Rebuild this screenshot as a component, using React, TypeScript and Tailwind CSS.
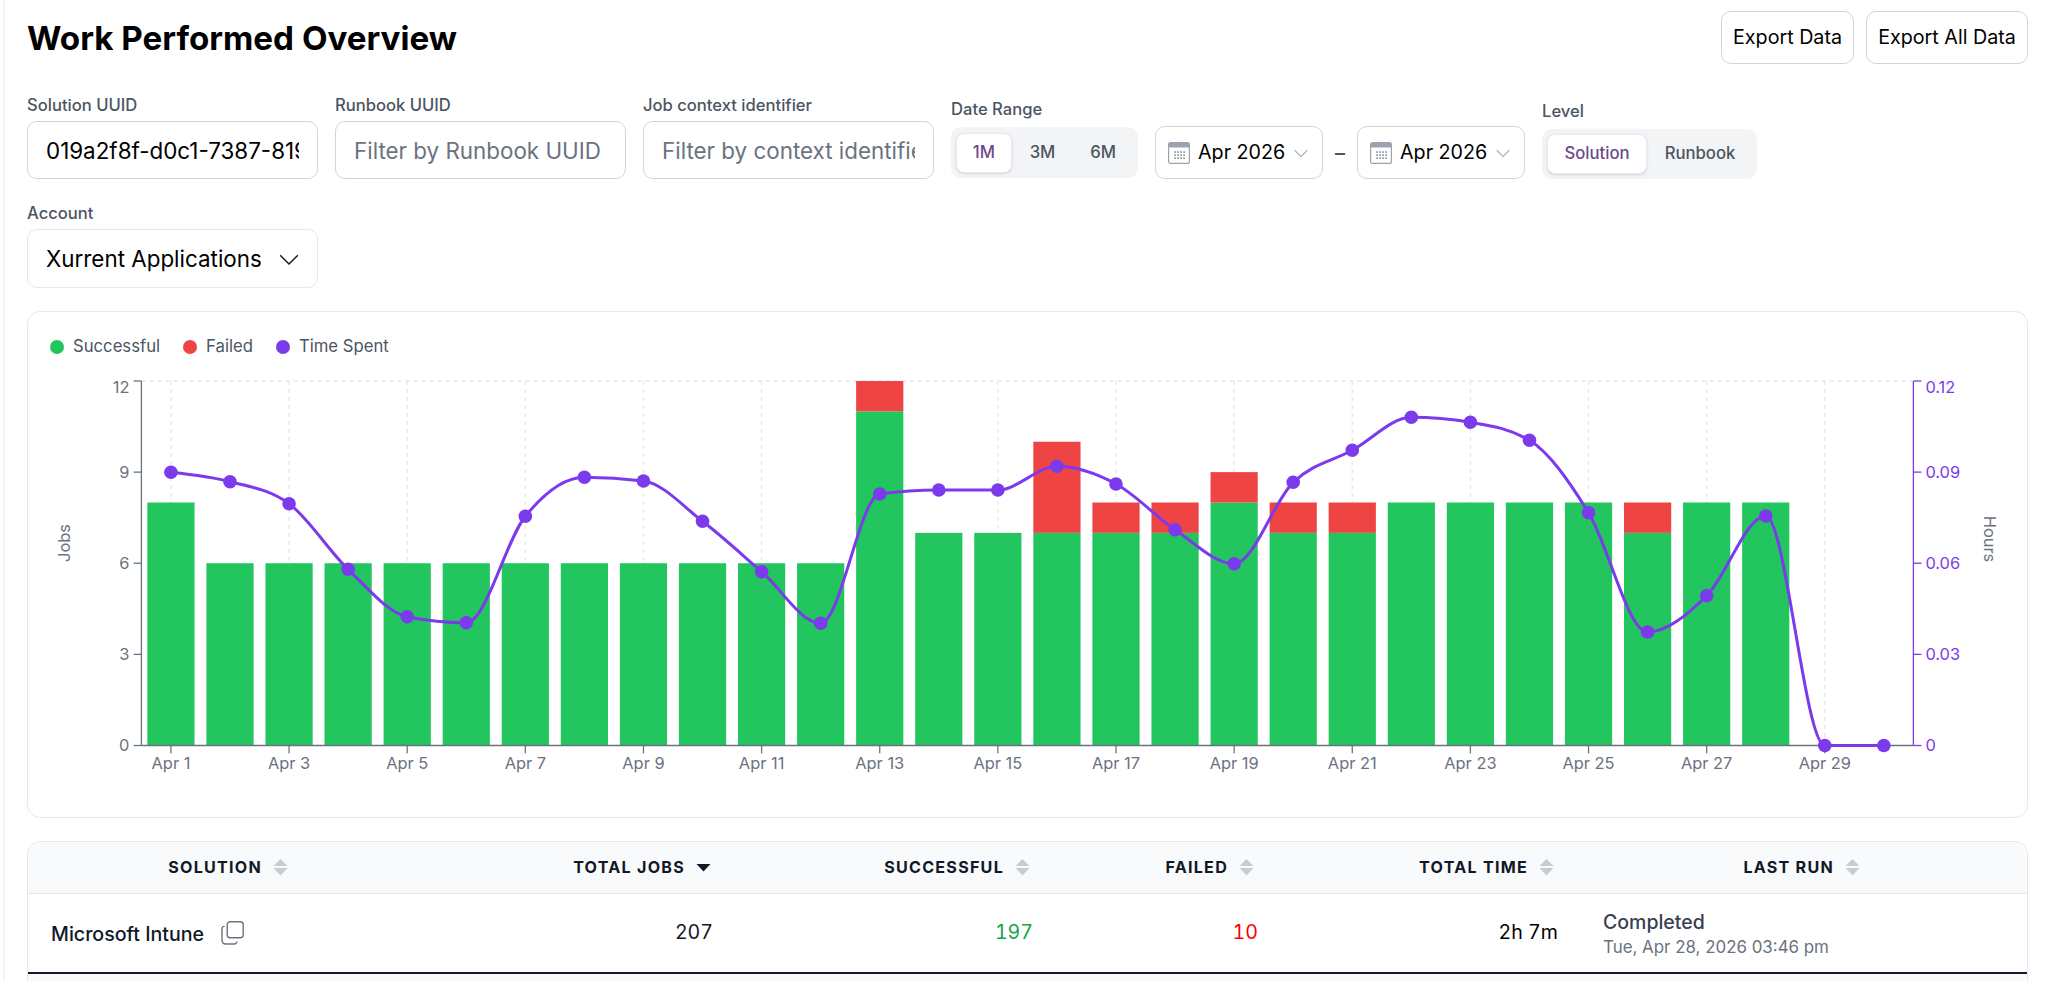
import React from "react";

const FONT = "font-['Inter',sans-serif]";

const jobs: [number, number][] = [
  [8, 0], [6, 0], [6, 0], [6, 0], [6, 0], [6, 0], [6, 0], [6, 0], [6, 0], [6, 0],
  [6, 0], [6, 0], [11, 1], [7, 0], [7, 0], [7, 3], [7, 1], [7, 1], [8, 1], [7, 1],
  [7, 1], [8, 0], [8, 0], [8, 0], [8, 0], [7, 1], [8, 0], [8, 0], [0, 0], [0, 0],
];
const lineY = [
  472.3, 481.7, 503.7, 569.3, 616.7, 622.7, 516.3, 477.3, 481, 521.3, 571.7, 623.3, 494, 490, 490,
  466.3, 484, 529.7, 563.7, 482.3, 450.3, 417.3, 422.3, 440.3, 512.7, 632, 595.7, 516, 745.5, 745.5,
];

const LEFT = 141.4;
const RIGHT = 1913.4;
const TOP = 381;
const BOTTOM = 745.5;
const STEP = (RIGHT - LEFT) / 30;
const UNIT = (BOTTOM - TOP) / 12;
const cx = (i: number) => LEFT + STEP * (i + 0.5);

function monotonePath(xs: number[], ys: number[]) {
  const n = xs.length;
  const t: number[] = new Array(n).fill(0);
  const sign = (v: number) => (v < 0 ? -1 : 1);
  for (let i = 1; i < n - 1; i++) {
    const h0 = xs[i] - xs[i - 1];
    const h1 = xs[i + 1] - xs[i];
    const s0 = (ys[i] - ys[i - 1]) / h0;
    const s1 = (ys[i + 1] - ys[i]) / h1;
    const p = (s0 * h1 + s1 * h0) / (h0 + h1);
    t[i] = (sign(s0) + sign(s1)) * Math.min(Math.abs(s0), Math.abs(s1), 0.5 * Math.abs(p)) || 0;
  }
  const edge = (i: number, j: number, tj: number) => {
    const h = xs[j] - xs[i];
    const s = (ys[j] - ys[i]) / h;
    return (3 * s - tj) / 2;
  };
  t[0] = edge(0, 1, t[1]);
  t[n - 1] = edge(n - 2, n - 1, t[n - 2]);
  let d = `M${xs[0]},${ys[0]}`;
  for (let i = 0; i < n - 1; i++) {
    const dx = (xs[i + 1] - xs[i]) / 3;
    d += `C${xs[i] + dx},${ys[i] + dx * t[i]} ${xs[i + 1] - dx},${ys[i + 1] - dx * t[i + 1]} ${xs[i + 1]},${ys[i + 1]}`;
  }
  return d;
}

function Chart() {
  const xs = jobs.map((_, i) => cx(i));
  const tickFont = { fontFamily: "Inter, sans-serif", fontSize: 16.4 };
  return (
    <svg viewBox="28 360 1999 457" className="block w-full h-[457px]">
      <line x1={LEFT} x2={RIGHT} y1={TOP} y2={TOP} stroke="#e5e7eb" strokeWidth={1.3} strokeDasharray="4 4" />
      {jobs.map((_, i) =>
        i % 2 === 0 ? (
          <line key={i} x1={cx(i)} x2={cx(i)} y1={TOP} y2={BOTTOM} stroke="#e5e7eb" strokeWidth={1.3} strokeDasharray="4 4" />
        ) : null
      )}
      {jobs.map(([s, f], i) => {
        const bw = 47.2;
        const x = cx(i) - bw / 2;
        return (
          <g key={i}>
            {s > 0 && <rect x={x} y={BOTTOM - s * UNIT} width={bw} height={s * UNIT} fill="#22c55e" />}
            {f > 0 && <rect x={x} y={BOTTOM - (s + f) * UNIT} width={bw} height={f * UNIT} fill="#ef4444" />}
          </g>
        );
      })}
      <line x1={LEFT} x2={LEFT} y1={TOP} y2={BOTTOM} stroke="#6b7280" strokeWidth={1.3} />
      <line x1={LEFT} x2={RIGHT} y1={BOTTOM} y2={BOTTOM} stroke="#6b7280" strokeWidth={1.3} />
      <line x1={RIGHT} x2={RIGHT} y1={TOP} y2={BOTTOM} stroke="#7c3aed" strokeWidth={1.3} />
      {[12, 9, 6, 3, 0].map((v) => {
        const y = BOTTOM - v * UNIT;
        return (
          <g key={v}>
            <line x1={LEFT - 7.8} x2={LEFT} y1={y} y2={y} stroke="#6b7280" strokeWidth={1.3} />
            <text x={LEFT - 12} y={v === 12 ? y + 11.5 : y + 5.8} textAnchor="end" fill="#6b7280" style={tickFont}>
              {v}
            </text>
          </g>
        );
      })}
      {["0.12", "0.09", "0.06", "0.03", "0"].map((v, i) => {
        const y = TOP + i * 3 * UNIT;
        return (
          <g key={v}>
            <line x1={RIGHT} x2={RIGHT + 8} y1={y} y2={y} stroke="#7c3aed" strokeWidth={1.3} />
            <text x={RIGHT + 12} y={i === 0 ? y + 11.5 : y + 5.8} fill="#7c3aed" style={tickFont}>
              {v}
            </text>
          </g>
        );
      })}
      {jobs.map((_, i) =>
        i % 2 === 0 ? (
          <g key={i}>
            <line x1={cx(i)} x2={cx(i)} y1={BOTTOM} y2={BOTTOM + 7.8} stroke="#6b7280" strokeWidth={1.3} />
            <text x={cx(i)} y={769} textAnchor="middle" fill="#6b7280" style={tickFont}>
              {`Apr ${i + 1}`}
            </text>
          </g>
        ) : null
      )}
      <text transform="translate(70 543) rotate(-90)" textAnchor="middle" fill="#6b7280" style={tickFont}>
        Jobs
      </text>
      <text transform="translate(1984 539) rotate(90)" textAnchor="middle" fill="#6b7280" style={tickFont}>
        Hours
      </text>
      <path d={monotonePath(xs, lineY)} fill="none" stroke="#7c3aed" strokeWidth={3} />
      {xs.map((x, i) => (
        <circle key={i} cx={x} cy={lineY[i]} r={6.8} fill="#7c3aed" />
      ))}
    </svg>
  );
}

function Label({ children, raised }: { children: React.ReactNode; raised?: boolean }) {
  return (
    <div className={`text-[16.6px] leading-[22px] font-medium text-[#4b5563] whitespace-nowrap ${raised ? "mb-[7px]" : "mb-[5px]"}`}>
      {children}
    </div>
  );
}

function TextField({ label, value, placeholder }: { label: string; value?: string; placeholder?: string }) {
  return (
    <div className="w-[291px]">
      <Label>{label}</Label>
      <input
        readOnly
        value={value ?? ""}
        placeholder={placeholder}
        className="block w-full h-[58px] px-[18px] rounded-[10px] border border-[#d1d5db] bg-white text-[22.4px] text-black placeholder:text-[#6b7280] outline-none"
      />
    </div>
  );
}

function Segment({ items, wide }: { items: string[]; wide?: boolean }) {
  return (
    <div className={`flex items-center gap-[1px] rounded-[10px] bg-[#f3f4f6] p-[5px] ${wide ? "h-[50px]" : "h-[51px]"}`}>
      {items.map((t, i) =>
        i === 0 ? (
          <div
            key={t}
            className={`flex items-center justify-center h-[40px] rounded-[8px] border border-[#f0e4fb] bg-white text-[16.7px] font-medium text-[#6b4a8c] shadow-sm ${wide ? "w-[100px]" : "w-[56px]"}`}
          >
            {t}
          </div>
        ) : (
          <div key={t} className={`flex items-center justify-center h-[40px] text-[16.7px] font-medium text-[#4b5563] ${wide ? "w-[104px]" : "w-[60px]"}`}>
            {t}
          </div>
        )
      )}
    </div>
  );
}

function CalendarIcon() {
  const dots: React.ReactNode[] = [];
  for (let r = 0; r < 3; r++) {
    for (let c = 0; c < 4; c++) {
      dots.push(<rect key={`${r}-${c}`} x={6.2 + c * 3} y={9.2 + r * 3} width={1.8} height={1.8} fill="#9ca3af" />);
    }
  }
  return (
    <svg width="22" height="22" viewBox="0 0 22 22" className="shrink-0">
      <rect x="0.6" y="0.6" width="20.8" height="20.8" rx="2" fill="#fff" stroke="#9ca3af" strokeWidth="1.2" />
      <path d="M0.6 2.6a2 2 0 0 1 2-2h16.8a2 2 0 0 1 2 2V5.5H0.6z" fill="#9ca3af" />
      {dots}
    </svg>
  );
}

function Chevron({ size, color }: { size: number; color: string }) {
  return (
    <svg width={size} height={size} viewBox="0 0 20 20" fill="none" stroke={color} strokeWidth="1.3" className="shrink-0">
      <path d="M2 6.5 10 14.5l8-8" />
    </svg>
  );
}

function MonthPicker() {
  return (
    <div className="flex items-center w-[168px] h-[53px] pl-[12px] rounded-[10px] border border-[#d1d5db] bg-white">
      <CalendarIcon />
      <span className="ml-[8px] text-[19.7px] text-black whitespace-nowrap">Apr 2026</span>
      <span className="ml-[8px]">
        <Chevron size={16} color="#9ca3af" />
      </span>
    </div>
  );
}

function SortBoth() {
  return (
    <svg width="15" height="17" viewBox="0 0 15 17" className="shrink-0">
      <path d="M7.5 0 14.5 7H0.5z" fill="#c9cbd1" />
      <path d="M7.5 16.5 14.5 9H0.5z" fill="#c9cbd1" />
    </svg>
  );
}

function SortDown() {
  return (
    <svg width="15" height="9" viewBox="0 0 15 9" className="shrink-0">
      <path d="M7.5 8.5 14.5 1H0.5z" fill="#111827" />
    </svg>
  );
}

function CopyIcon() {
  return (
    <svg width="24" height="24" viewBox="0 0 24 24" fill="none" stroke="#6b7280" strokeWidth="1.4" className="shrink-0 ml-[17px]">
      <rect x="6.2" y="0.7" width="16" height="16" rx="3" />
      <path d="M1 7v12.5A3.5 3.5 0 0 0 4.5 23H13a3 3 0 0 0 3-2.5" />
      <path d="M1 7a2.6 2.6 0 0 1 2.6-1.6" />
    </svg>
  );
}

function HeadCell({ label, pr, down }: { label: string; pr: string; down?: boolean }) {
  return (
    <div className={`flex items-center justify-end gap-[11px] ${pr}`}>
      <span className="text-[16.1px] font-bold tracking-[1.25px] text-[#111827] whitespace-nowrap">{label}</span>
      {down ? <SortDown /> : <SortBoth />}
    </div>
  );
}

const COLS = "grid-cols-[273px_435px_320px_225px_300px_1fr]";

export default function App() {
  return (
    <div className={`${FONT} h-[981px] overflow-hidden bg-white`}>
      <div className="h-full ml-[3px] border-l-2 border-[#f3f4f6] pl-[22px] pr-[20px] pt-[11px]">
        <div className="flex items-start justify-between">
          <h1 className="mt-[5px] text-[33.2px] leading-[44px] font-bold text-black whitespace-nowrap">Work Performed Overview</h1>
          <div className="flex gap-[12px]">
            <button className="h-[53px] w-[133px] rounded-[10px] border border-[#d1d5db] bg-white text-[19.7px] text-black">Export Data</button>
            <button className="h-[53px] w-[162px] rounded-[10px] border border-[#d1d5db] bg-white text-[19.7px] text-black">Export All Data</button>
          </div>
        </div>

        <div className="mt-[30px] flex flex-wrap items-end gap-x-[17px] gap-y-[23px]">
          <TextField label="Solution UUID" value="019a2f8f-d0c1-7387-8199-3e5a7c1d2b40" />
          <TextField label="Runbook UUID" placeholder="Filter by Runbook UUID" />
          <TextField label="Job context identifier" placeholder="Filter by context identifier" />
          <div className="w-[187px] pb-[1px]">
            <Label raised>Date Range</Label>
            <Segment items={["1M", "3M", "6M"]} />
          </div>
          <div className="flex items-center gap-[10px]">
            <MonthPicker />
            <span className="text-[#4b5563] text-[20px] font-semibold w-[14px] text-center">–</span>
            <MonthPicker />
          </div>
          <div>
            <Label raised>Level</Label>
            <Segment items={["Solution", "Runbook"]} wide />
          </div>
          <div className="w-[291px]">
            <Label>Account</Label>
            <div className="flex items-center justify-between h-[59px] pl-[18px] pr-[17px] rounded-[10px] border border-[#e5e7eb] bg-white">
              <span className="text-[22.4px] text-black whitespace-nowrap">Xurrent Applications</span>
              <Chevron size={22} color="#111827" />
            </div>
          </div>
        </div>

        <div className="mt-[23px] rounded-[13px] border border-[#e5e7eb] bg-white">
          <div className="flex items-center h-[22px] mt-[24px] mb-[-1px] ml-[22px]">
            <span className="w-[14px] h-[14px] rounded-full bg-[#22c55e]" />
            <span className="ml-[9px] text-[16.7px] text-[#4b5563]">Successful</span>
            <span className="ml-[23px] w-[14px] h-[14px] rounded-full bg-[#ef4444]" />
            <span className="ml-[9px] text-[16.7px] text-[#4b5563]">Failed</span>
            <span className="ml-[23px] w-[14px] h-[14px] rounded-full bg-[#7c3aed]" />
            <span className="ml-[9px] text-[16.7px] text-[#4b5563]">Time Spent</span>
          </div>
          <div className="mt-[3px]">
            <Chart />
          </div>
        </div>

        <div className="mt-[23px] rounded-t-[13px] border border-[#e5e7eb] overflow-hidden">
          <div className={`grid ${COLS} h-[52px] bg-[#f9fafb] border-b border-[#e5e7eb]`}>
            <HeadCell label="SOLUTION" pr="pr-[13px]" />
            <HeadCell label="TOTAL JOBS" pr="pr-[25px]" down />
            <HeadCell label="SUCCESSFUL" pr="pr-[26px]" />
            <HeadCell label="FAILED" pr="pr-[27px]" />
            <HeadCell label="TOTAL TIME" pr="pr-[27px]" />
            <HeadCell label="LAST RUN" pr="pr-[167px]" />
          </div>
          <div className={`grid ${COLS} h-[80px] items-center bg-white border-b-2 border-[#111827] text-[19.6px]`}>
            <div className="flex items-center pl-[23px] font-medium text-[#111827] whitespace-nowrap">
              <span className="pt-[3px]">Microsoft Intune</span>
              <CopyIcon />
            </div>
            <div className="text-right pr-[23px] tabular-nums text-[#111827]">207</div>
            <div className="text-right pr-[23px] tabular-nums text-[#16a34a]">197</div>
            <div className="text-right pr-[23px] tabular-nums text-[#ff0000]">10</div>
            <div className="text-right pr-[23px] tabular-nums text-black">2h 7m</div>
            <div className="pl-[22px] pt-[1px]">
              <div className="text-[19.5px] leading-[26px] font-medium text-[#374151]">Completed</div>
              <div className="mt-[1px] text-[16.9px] leading-[22px] text-[#6b7280] whitespace-nowrap">Tue, Apr 28, 2026 03:46 pm</div>
            </div>
          </div>
          <div className="h-[60px] bg-[#f9fafb]" />
        </div>
      </div>
    </div>
  );
}
